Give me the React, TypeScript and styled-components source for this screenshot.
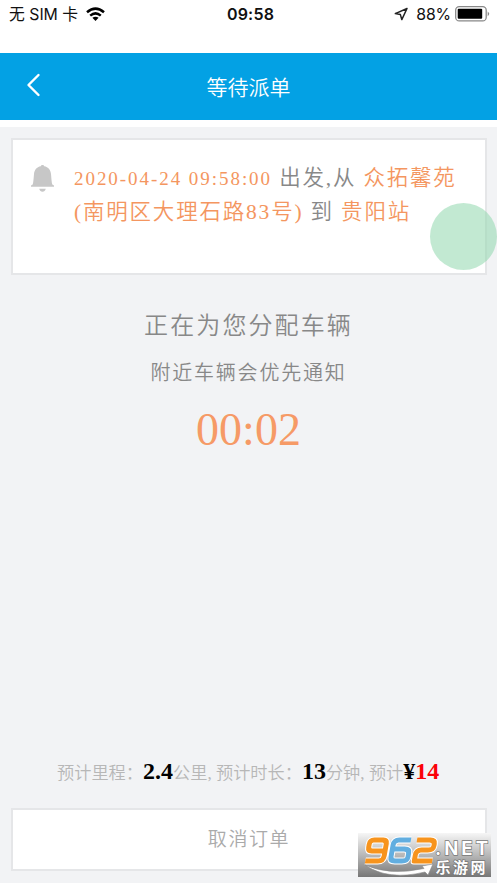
import React from "react";
import styled, { createGlobalStyle } from "styled-components";

const GlobalStyle = createGlobalStyle`
  * { box-sizing: border-box; }
  body { margin: 0; background: #f2f3f5; }
`;

const serif = '"Liberation Serif", "Noto Sans CJK SC", serif';
const sans = 'Inter, "Noto Sans CJK SC", sans-serif';

const Screen = styled.main`
  position: relative;
  width: 497px;
  height: 883px;
  overflow: hidden;
  display: flex;
  flex-direction: column;
  background: #f2f3f5;
  font-family: ${serif};
  font-weight: 350;
  white-space: nowrap;
`;

const StatusBar = styled.div`
  height: 53px;
  flex: none;
  display: grid;
  grid-template-columns: 1fr auto 1fr;
  align-items: start;
  padding: 3px 7px 0 9px;
  background: #fff;
  color: #111;
  font: 400 16px/22px ${sans};
`;

const StatusGroup = styled.div<{ $end?: boolean }>`
  display: flex;
  align-items: center;
  height: 22px;
  justify-content: ${(p) => (p.$end ? "flex-end" : "flex-start")};
`;

const Carrier = styled.span`
  width: 77px;
  padding-top: 1px;
  font-size: 15.8px;
  font-weight: 375;
`;

const Clock = styled.span`
  font-weight: 600;
  font-size: 16px;
  letter-spacing: 0.2px;
  padding-left: 2px;
`;

const Percent = styled.span`
  margin: 0 4px 0 8px;
  padding-top: 1px;
  font-size: 15.8px;
  letter-spacing: -0.1px;
`;

const Header = styled.header`
  height: 74px;
  flex: none;
  display: grid;
  grid-template-columns: 60px 1fr 60px;
  align-items: center;
  background: #03a1e4;
  border-bottom: 7px solid #fff;
  color: #fff;
`;

const Back = styled.svg`
  margin: -3px 0 0 26px;
`;

const Title = styled.h1`
  margin: 0;
  padding-top: 2px;
  text-align: center;
  font: 350 21px/30px ${serif};
`;

const Card = styled.section`
  flex: none;
  height: 137px;
  margin: 11px 10px 0 11px;
  padding: 21px 0 0 18px;
  display: flex;
  background: #fff;
  border: 2px solid #e5e6e8;
`;

const Bell = styled.svg`
  margin: 4px 19px 0 0;
  flex: none;
`;

const Trip = styled.div`
  display: flex;
  flex-direction: column;
`;

const TripLine = styled.div`
  height: 34px;
  font-size: 21.5px;
  line-height: 34px;
  letter-spacing: 1.8px;
  color: #888;
`;

const Accent = styled.span`
  color: #f49660;
`;

const DateText = styled(Accent)`
  font-size: 19px;
  letter-spacing: 1.95px;
`;

const Waiting = styled.section`
  flex: 1;
  display: flex;
  flex-direction: column;
  align-items: center;
  padding-top: 33px;
  color: #888;
`;

const Assigning = styled.div`
  font-size: 24px;
  line-height: 36px;
  letter-spacing: 2.1px;
`;

const Nearby = styled.div`
  margin-top: 14px;
  font-size: 20px;
  line-height: 30px;
  letter-spacing: 1.8px;
`;

const Timer = styled.div`
  margin-top: 16px;
  font-size: 46px;
  line-height: 52px;
  color: #f69a66;
`;

const Estimate = styled.div`
  height: 36px;
  flex: none;
  margin-bottom: 19px;
  padding-left: 57px;
  display: flex;
  align-items: baseline;
  font-size: 17.2px;
  line-height: 36px;
  color: #b7b7b7;
`;

const Figure = styled.strong<{ $price?: boolean }>`
  font-size: 24px;
  font-weight: 700;
  color: ${(p) => (p.$price ? "#fb0007" : "#000")};
`;

const Label = styled.span`
  width: 86px;
`;

const Cancel = styled.button`
  flex: none;
  height: 63px;
  margin: 0 10px 12px 11px;
  padding: 0;
  background: #fff;
  border: 2px solid #e5e6e8;
  color: #aaa;
  font: 350 19px/30px ${serif};
  letter-spacing: 1.6px;
`;

const AssistDot = styled.div`
  position: absolute;
  left: 430px;
  top: 203px;
  width: 67px;
  height: 67px;
  border-radius: 50%;
  background: rgba(147, 216, 175, 0.56);
`;

const Watermark = styled.svg`
  position: absolute;
  left: 358px;
  top: 833px;
`;

export default function App() {
  return (
    <Screen>
      <GlobalStyle />
      <StatusBar>
        <StatusGroup>
          <Carrier>无 SIM 卡</Carrier>
          <svg width="19" height="15" viewBox="0 0 19 15" fill="none" stroke="#000" strokeWidth="2.5">
            <path d="M1 5.3Q9.5-2 18 5.3M4.2 8.6Q9.5 4.2 14.8 8.6" />
            <path d="M6.4 10.8Q9.5 8.5 12.6 10.8L9.5 14Z" fill="#000" stroke="none" />
          </svg>
        </StatusGroup>
        <Clock>09:58</Clock>
        <StatusGroup $end>
          <svg width="14" height="14" viewBox="0 0 14 14" fill="none" stroke="#222" strokeWidth="1.5" strokeLinejoin="round">
            <path d="M13 1.5 1.3 6.6 6.4 7.6 7.8 12.6Z" />
          </svg>
          <Percent>88%</Percent>
          <svg width="35" height="16" viewBox="0 0 35 16">
            <rect x=".7" y=".7" width="30.5" height="14.2" rx="3.5" fill="#fff" stroke="#888" strokeWidth="1.3" />
            <rect x="2.7" y="2.8" width="24.5" height="10" rx="1" />
            <path d="M32.7 5.5q3 2.3 0 4.8z" fill="#888" />
          </svg>
        </StatusGroup>
      </StatusBar>
      <Header>
        <Back width="15" height="24" viewBox="0 0 15 24" fill="none" stroke="#fff" strokeWidth="2.4" strokeLinecap="round" strokeLinejoin="round">
          <path d="M12.5 2 2.5 12l10 10" />
        </Back>
        <Title>等待派单</Title>
      </Header>
      <Card>
        <Bell width="24" height="28" viewBox="0 0 24 28" fill="#c7c7c7">
          <path d="M11.5 0c.9 0 1.500.4 1.700 1.200C17.300 1.900 19.600 4.800 20 9c.5 5.500.6 8.500 1.300 10.500l1.700 1v1.200H0v-1.200l1.700-1C2.400 17.500 2.500 14.500 3 9 3.400 4.800 5.700 1.900 9.800 1.200 10 .4 10.600 0 11.500 0zM8.200 23.700h6.600c-.5 1.900-1.700 3-3.300 3s-2.800-1.100-3.300-3z" />
        </Bell>
        <Trip>
          <TripLine>
            <DateText>2020-04-24 09:58:00</DateText> 出发,从 <Accent>众拓馨苑</Accent>
          </TripLine>
          <TripLine>
            <Accent>(南明区大理石路83号)</Accent> 到 <Accent>贵阳站</Accent>
          </TripLine>
        </Trip>
      </Card>
      <Waiting>
        <Assigning>正在为您分配车辆</Assigning>
        <Nearby>附近车辆会优先通知</Nearby>
        <Timer>00:02</Timer>
      </Waiting>
      <Estimate>
        <Label>预计里程：</Label>
        <Figure>2.4</Figure>
        <span>公里, 预计时长：</span>
        <Figure>13</Figure>
        <span>分钟, 预计</span>
        <Figure>¥</Figure>
        <Figure $price>14</Figure>
      </Estimate>
      <Cancel>取消订单</Cancel>
      <AssistDot />
      <Watermark width="134" height="44" viewBox="0 0 134 44">
        <defs>
          <linearGradient id="plate" x1="0" y1="0" x2="0" y2="1">
            <stop offset="0" stopColor="#f6f6f6" />
            <stop offset=".5" stopColor="#b8b8b8" />
            <stop offset="1" stopColor="#777" />
          </linearGradient>
        </defs>
        <rect width="133" height="44" fill="url(#plate)" />
        <g fill="none" strokeLinejoin="round" transform="translate(7.500 4) skewX(-10)">
          <g stroke="#fff" strokeWidth="7">
            <path d="M22 14H9Q5 14 5 10V7Q5 3 9 3H18Q22 3 22 7V19Q22 24 17 24H4M46 3H34Q29 3 29 8V20Q29 24 34 24H41Q46 24 46 20V16Q46 12 41 12H29M52 3H65Q70 3 70 7V9Q70 13 65 13H58Q53 13 53 18V24H71" />
          </g>
          <path stroke="#f7941d" strokeWidth="5" d="M22 14H9Q5 14 5 10V7Q5 3 9 3H18Q22 3 22 7V19Q22 24 17 24H4" />
          <path stroke="#62aee0" strokeWidth="5" d="M46 3H34Q29 3 29 8V20Q29 24 34 24H41Q46 24 46 20V16Q46 12 41 12H29" />
          <path stroke="#f7941d" strokeWidth="5" d="M52 3H65Q70 3 70 7V9Q70 13 65 13H58Q53 13 53 18V24H71" />
        </g>
        <path d="M7 32Q32 43 66 35.500L64 33 75 31 70 42 67 39Q30 48 7 32Z" fill="#fff" stroke="#888" strokeWidth=".6" />
        <g fill="#fff" stroke="#777" strokeWidth="1.4" paintOrder="stroke" fontWeight="700">
          <text x="77" y="22" fontFamily="Inter, sans-serif" fontSize="18.500" textLength="53" lengthAdjust="spacing">.NET</text>
          <text x="77.500" y="39.500" fontFamily='"Noto Sans CJK SC", sans-serif' fontSize="15" textLength="50">乐游网</text>
        </g>
      </Watermark>
    </Screen>
  );
}
